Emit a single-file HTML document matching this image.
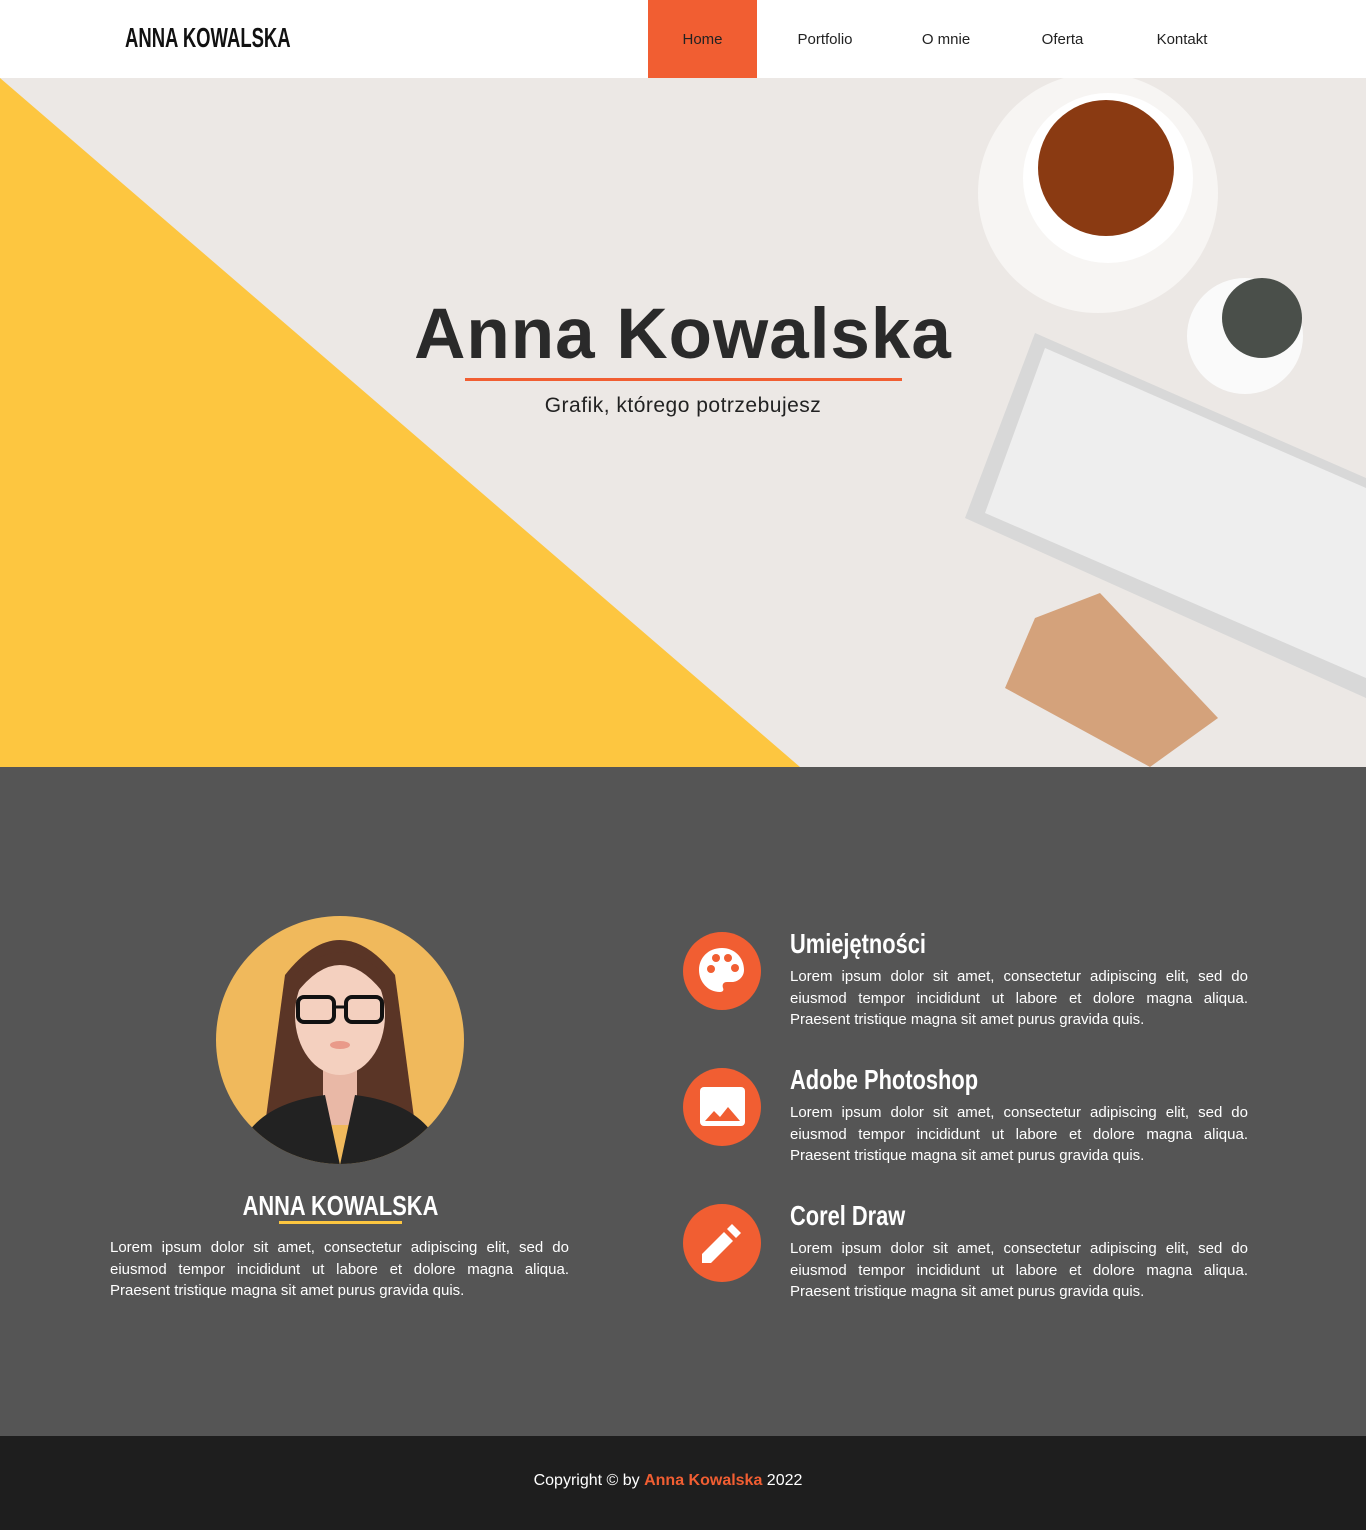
<!DOCTYPE html>
<html><head><meta charset="utf-8"><style>
*{margin:0;padding:0;box-sizing:border-box}
body{width:1366px;height:1530px;font-family:"Liberation Sans",sans-serif;background:#fff;position:relative;overflow:hidden}
.hdr{position:absolute;left:0;top:0;width:1366px;height:78px;background:#fff}
.logo{position:absolute;left:125px;top:22px;font-size:28px;font-weight:bold;transform:scaleX(.66);transform-origin:left;color:#111}
.nav a{position:absolute;top:0;height:78px;line-height:80px;font-size:15px;color:#222;text-decoration:none;text-align:center}
.hero{position:absolute;left:0;top:78px;width:1366px;height:689px;background:#ece8e5;overflow:hidden}
.dark{position:absolute;left:0;top:767px;width:1366px;height:669px;background:#555}
.foot{position:absolute;left:0;top:1436px;width:1366px;height:94px;background:#1e1e1e;color:#fff;font-size:16px;text-align:center;line-height:90px;padding-right:30px}
.ic{position:absolute;left:683px;width:78px;height:78px;border-radius:50%;background:#f15e32}
.h3{position:absolute;left:790px;color:#fff;font-size:28px;font-weight:bold;transform:scaleX(.78);transform-origin:left}
.p{position:absolute;left:790px;width:458px;color:#fff;font-size:15px;line-height:21.5px;text-align:justify}
</style></head><body>
<div class="hdr"><div class="logo">ANNA KOWALSKA</div>
<div class="nav">
<a style="left:648px;width:109px;background:#f15e32">Home</a>
<a style="left:780px;width:90px">Portfolio</a>
<a style="left:905px;width:82px">O mnie</a>
<a style="left:1025px;width:75px">Oferta</a>
<a style="left:1140px;width:84px">Kontakt</a>
</div></div>
<div class="hero">
<svg width="1366" height="689" style="position:absolute;left:0;top:0">
<polygon points="0,0 800,689 0,689" fill="#fdc640"/>
<circle cx="1098" cy="115" r="120" fill="#f7f5f3"/><circle cx="1108" cy="100" r="85" fill="#fff"/><circle cx="1106" cy="90" r="68" fill="#8a3a12"/>
<circle cx="1245" cy="258" r="58" fill="#fafafa"/><circle cx="1262" cy="240" r="40" fill="#4a4f4a"/>
<polygon points="1035,255 1366,400 1366,620 965,440" fill="#d8d8d8"/>
<polygon points="1045,270 1366,410 1366,600 985,435" fill="#eeeeee"/>
<polygon points="1035,540 1100,515 1218,640 1150,689 1005,610" fill="#d4a27b"/>
</svg>
<div style="position:absolute;left:0;width:1366px;top:216px;text-align:center;font-size:71px;font-weight:bold;color:#2a2a2a;letter-spacing:1px">Anna Kowalska</div>
<div style="position:absolute;left:465px;top:300px;width:437px;height:3px;background:#f15e32"></div>
<div style="position:absolute;left:0;width:1366px;top:316px;text-align:center;font-size:21px;color:#222;letter-spacing:.5px">Grafik, którego potrzebujesz</div>
</div>
<div class="dark">
<svg width="250" height="250" style="position:absolute;left:215px;top:148px" viewBox="0 0 250 250">
<defs><clipPath id="c"><circle cx="125" cy="125" r="124"/></clipPath></defs>
<circle cx="125" cy="125" r="124" fill="#f0b95c"/>
<g clip-path="url(#c)">
<path d="M70 60 Q125 -10 180 60 L200 210 L50 210 Z" fill="#5a3526"/>
<rect x="108" y="150" width="34" height="60" fill="#e9b8a6"/>
<ellipse cx="125" cy="100" rx="45" ry="60" fill="#f4d0bf"/>
<path d="M80 80 Q125 20 170 80 L170 60 Q125 15 80 60Z" fill="#5a3526"/>
<rect x="83" y="82" width="36" height="25" rx="6" fill="none" stroke="#111" stroke-width="4"/>
<rect x="131" y="82" width="36" height="25" rx="6" fill="none" stroke="#111" stroke-width="4"/>
<path d="M119 92h12" stroke="#111" stroke-width="3"/>
<ellipse cx="125" cy="130" rx="10" ry="4" fill="#e99a8a"/>
<path d="M20 250 Q30 190 110 180 L125 250Z M230 250 Q220 190 140 180 L125 250Z" fill="#222"/>
</g></svg>
<div style="position:absolute;left:110px;width:460px;top:423px;text-align:center;color:#fff;font-size:28px;font-weight:bold"><span style="display:inline-block;transform:scaleX(.78)">ANNA KOWALSKA</span></div>
<div style="position:absolute;left:279px;top:454px;width:123px;height:3px;background:#fdc640"></div>
<div style="position:absolute;left:110px;top:470px;width:459px;color:#fff;font-size:15px;line-height:21.5px;text-align:justify">Lorem ipsum dolor sit amet, consectetur adipiscing elit, sed do eiusmod tempor incididunt ut labore et dolore magna aliqua. Praesent tristique magna sit amet purus gravida quis.</div>

<div class="ic" style="top:165px"><svg width="78" height="78" viewBox="0 0 78 78"><path d="M39 16C25 16 16 26 16 38s9 22 21 22c3 0 4-2 3-4-1-3 0-6 4-6h5c6 0 12-5 12-12C61 25 51 16 39 16z" fill="#fff"/><circle cx="28" cy="37" r="4" fill="#f15e32"/><circle cx="33" cy="26" r="4" fill="#f15e32"/><circle cx="45" cy="26" r="4" fill="#f15e32"/><circle cx="52" cy="36" r="4" fill="#f15e32"/></svg></div>
<div class="h3" style="top:161px">Umiejętności</div>
<div class="p" style="top:199px">Lorem ipsum dolor sit amet, consectetur adipiscing elit, sed do eiusmod tempor incididunt ut labore et dolore magna aliqua. Praesent tristique magna sit amet purus gravida quis.</div>

<div class="ic" style="top:301px"><svg width="78" height="78" viewBox="0 0 78 78"><rect x="17" y="19" width="45" height="39" rx="4" fill="#fff"/><path d="M22 53l9-10 6 6 8-10 12 14z" fill="#f15e32"/></svg></div>
<div class="h3" style="top:297px">Adobe Photoshop</div>
<div class="p" style="top:335px">Lorem ipsum dolor sit amet, consectetur adipiscing elit, sed do eiusmod tempor incididunt ut labore et dolore magna aliqua. Praesent tristique magna sit amet purus gravida quis.</div>

<div class="ic" style="top:437px"><svg width="78" height="78" viewBox="0 0 78 78"><path d="M19 50l22-22 9 9-22 22H19z" fill="#fff"/><path d="M44 25l5-5 9 9-5 5z" fill="#fff"/></svg></div>
<div class="h3" style="top:433px">Corel Draw</div>
<div class="p" style="top:471px">Lorem ipsum dolor sit amet, consectetur adipiscing elit, sed do eiusmod tempor incididunt ut labore et dolore magna aliqua. Praesent tristique magna sit amet purus gravida quis.</div>
</div>
<div class="foot">Copyright © by <b style="color:#f15e32">Anna Kowalska</b> 2022</div>
</body></html>
